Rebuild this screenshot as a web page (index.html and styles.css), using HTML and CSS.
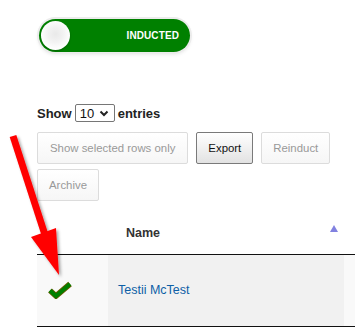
FILE: index.html
```html
<!DOCTYPE html>
<html lang="en">
<head>
  <meta charset="UTF-8" />
  <title>Inductees</title>
  <link rel="stylesheet" href="styles.css">
</head>
<body>
  <div class="page">
    <div class="status-toggle">
      <span class="knob"></span>
      <span class="toggle-label">INDUCTED</span>
    </div>

    <div class="length-row">
      <label>Show
        <span class="fake-select">10 <svg width="10" height="7" viewBox="0 0 10 7"><path d="M1.5 1.5 L5 5 L8.5 1.5" fill="none" stroke="#222" stroke-width="2"/></svg></span>
        entries</label>
    </div>

    <div class="btn-bar">
      <button class="dt-btn disabled">Show selected rows only</button>
      <button class="dt-btn">Export</button>
      <button class="dt-btn disabled">Reinduct</button>
      <button class="dt-btn disabled">Archive</button>
    </div>

    <table class="grid">
      <thead>
        <tr>
          <th class="col-check"></th>
          <th class="col-name"><div class="th-inner"><span>Name</span><span class="sort-asc"></span></div></th>
          <th class="col-rest"></th>
        </tr>
      </thead>
      <tbody>
        <tr>
          <td class="col-check">
            <svg class="check" width="26" height="18" viewBox="0 0 26 18"><path d="M3 9.5 L9 15 L23 3" fill="none" stroke="#6b5a00" stroke-width="5.6"/><path d="M3 9.5 L9 15 L23 3" fill="none" stroke="#008000" stroke-width="4"/></svg>
          </td>
          <td class="col-name"><a href="#">Testii McTest</a></td>
          <td class="col-rest"></td>
        </tr>
      </tbody>
    </table>
  </div>

  <!-- annotation arrow drawn over the page -->
  <svg class="arrow" width="355" height="334" viewBox="0 0 355 334">
    <defs>
      <filter id="shade" x="-50%" y="-50%" width="200%" height="200%">
        <feDropShadow dx="2" dy="2" stdDeviation="1.5" flood-color="#000" flood-opacity="0.35"/>
      </filter>
    </defs>
    <g filter="url(#shade)">
      <line x1="13" y1="136" x2="46" y2="238" stroke="#ff0000" stroke-width="7"/>
      <polygon points="31,237 56,228 59,275" fill="#ff0000"/>
    </g>
  </svg>
</body>
</html>
```

FILE: styles.css
```css
body {
  margin: 0;
  width: 355px;
  height: 334px;
  overflow: hidden;
  background: #ffffff;
  font-family: "Liberation Sans", Arial, sans-serif;
  color: #222;
  position: relative;
}
.page {
  padding-left: 37px;
  padding-top: 19px;
}

.status-toggle {
  width: 151px;
  height: 33px;
  margin-left: 2px;
  border-radius: 17px;
  background: #008000;
  box-shadow: 0 0 0 2px #ececec, 0 2px 4px rgba(0,0,0,0.12);
  display: flex;
  align-items: center;
  justify-content: space-between;
  box-sizing: border-box;
  padding: 0 11px 0 2px;
}
.status-toggle .knob {
  width: 29px;
  height: 29px;
  border-radius: 50%;
  background: radial-gradient(circle at 50% 45%, #e9e9e9 0, #f2f2f2 35%, #ffffff 70%);
  box-shadow: 0 1px 2px rgba(0,0,0,0.25);
}
.status-toggle .toggle-label {
  color: #fff;
  font-weight: bold;
  font-size: 10px;
  letter-spacing: 0.1px;
}

.length-row {
  margin-top: 52px;
  height: 20px;
  font-size: 13px;
  font-weight: bold;
}
.length-row label {
  display: flex;
  align-items: center;
  gap: 3px;
}
.fake-select {
  display: inline-flex;
  align-items: center;
  gap: 5px;
  height: 18px;
  width: 40px;
  box-sizing: border-box;
  border: 1px solid #767676;
  border-radius: 2px;
  padding-left: 4px;
  font-weight: normal;
  font-size: 13px;
  color: #111;
}

.btn-bar {
  margin-top: 8px;
  width: 300px;
  display: flex;
  flex-wrap: wrap;
  column-gap: 8px;
  row-gap: 5px;
}
.dt-btn {
  height: 32px;
  padding: 0 11px;
  font-family: "Liberation Sans", Arial, sans-serif;
  font-size: 11.4px;
  color: #111;
  border: 1px solid #7a7a7a;
  border-radius: 2px;
  background: linear-gradient(#ffffff, #e2e2e2);
  cursor: pointer;
}
.dt-btn:first-child { padding: 0 12px; }
.dt-btn.disabled {
  color: #999;
  border-color: #dcdcdc;
  background: linear-gradient(#ffffff, #f6f6f6);
  cursor: default;
}

.grid {
  margin-top: 11px;
  width: 340px;
  border-collapse: collapse;
  font-size: 12.5px;
  table-layout: fixed;
}
.grid th,
.grid td {
  box-sizing: border-box;
}
.grid th {
  height: 42px;
  padding: 0;
  text-align: left;
  font-weight: bold;
  color: #333;
  border-bottom: 1px solid #111;
}
.grid .col-check { width: 71px; }
.grid .col-name { width: 236px; }
.grid th.col-name { padding: 0 6px 0 18px; }
.th-inner {
  display: flex;
  justify-content: space-between;
  align-items: center;
}
.sort-asc {
  width: 0;
  height: 0;
  border-left: 4px solid transparent;
  border-right: 4px solid transparent;
  border-bottom: 7px solid #8181e0;
  margin-top: -8px;
}
.grid td {
  height: 72px;
  padding: 0;
  border-bottom: 1px solid #111;
  background: #f9f9f9;
}
.grid td.col-name {
  background: #f1f1f1;
  padding-left: 10px;
}
.grid td.col-check { padding-left: 10px; }
.check { display: block; }
.grid a {
  color: #0d5fa6;
  text-decoration: none;
}

.arrow {
  position: absolute;
  left: 0;
  top: 0;
  pointer-events: none;
}
```
